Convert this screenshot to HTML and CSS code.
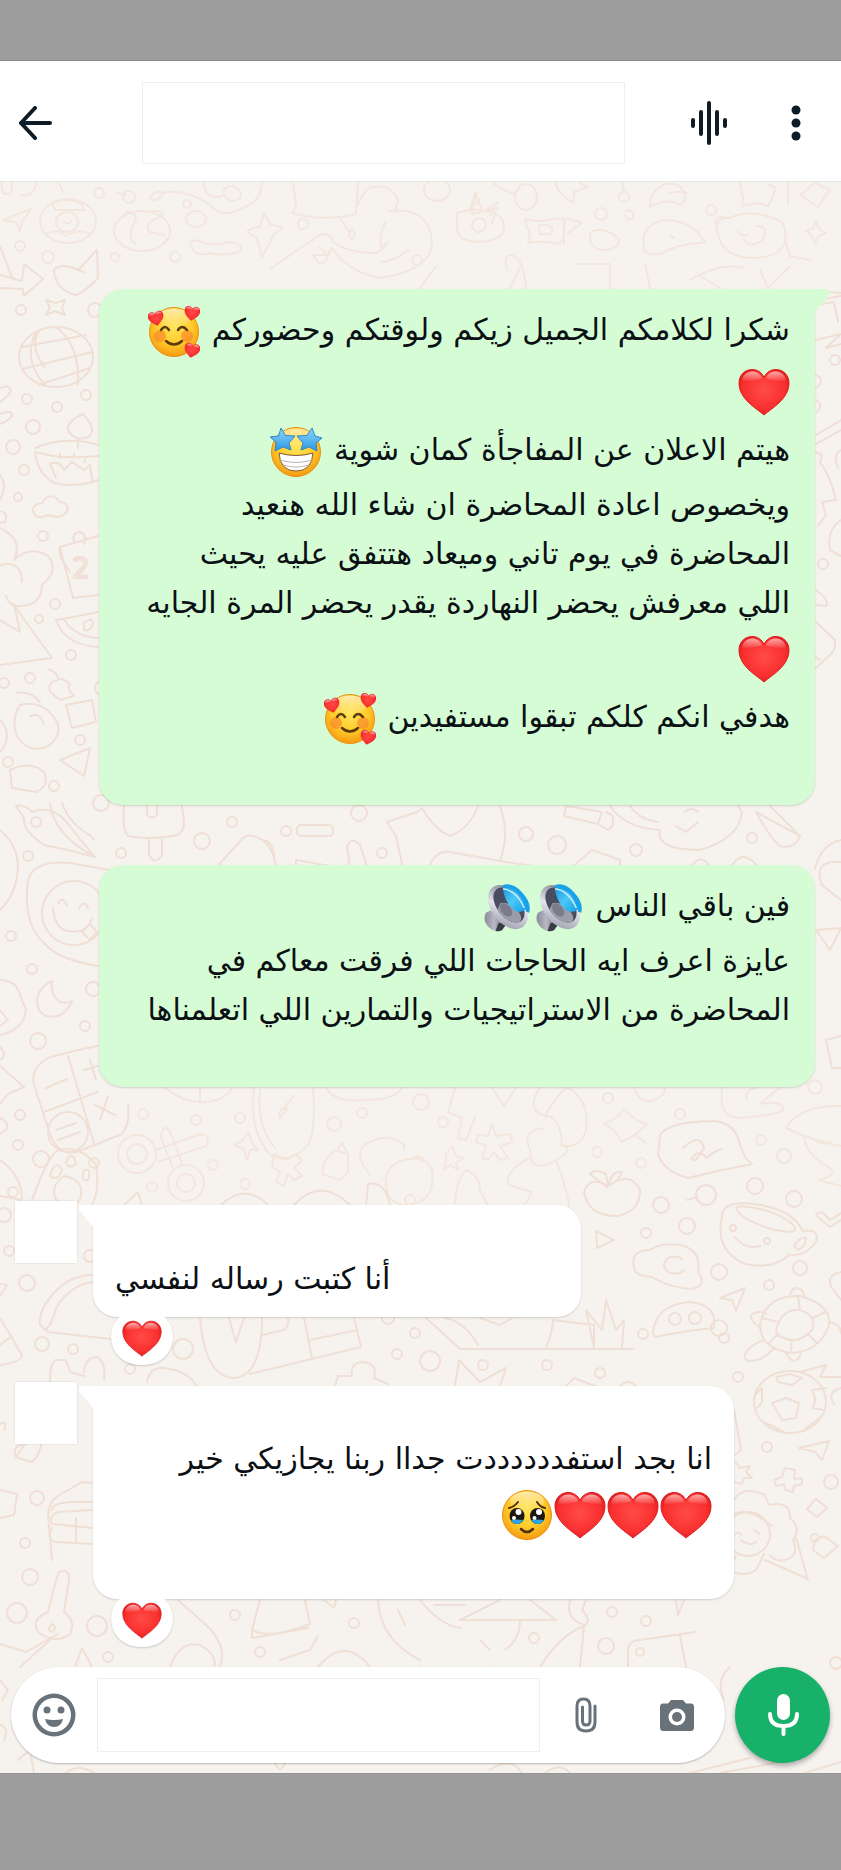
FILE: index.html
```html
<!DOCTYPE html>
<html lang="ar">
<head>
    <meta charset="utf-8">
    <meta name="viewport" content="width=device-width, initial-scale=1">
    <title>Chat</title>
    <link rel="stylesheet" href="styles.css">
</head>

<body>

  <!-- shared emoji -->
  <svg class="defs" width="0" height="0" aria-hidden="true">
    <defs>
      <radialGradient id="gFace" cx="50%" cy="38%" r="62%">
        <stop offset="0" stop-color="#ffe65a"/>
        <stop offset=".6" stop-color="#ffca28"/>
        <stop offset="1" stop-color="#f59a12"/>
      </radialGradient>
      <linearGradient id="gShine" x1="0" y1="0" x2="0" y2="1">
        <stop offset="0" stop-color="#fff" stop-opacity=".6"/>
        <stop offset="1" stop-color="#fff" stop-opacity="0"/>
      </linearGradient>
      <radialGradient id="gHeart" cx="50%" cy="45%" r="60%">
        <stop offset="0" stop-color="#ff4b47"/>
        <stop offset=".7" stop-color="#f9302f"/>
        <stop offset="1" stop-color="#dd1519"/>
      </radialGradient>
      <linearGradient id="gStar" x1="0" y1="0" x2="0" y2="1">
        <stop offset="0" stop-color="#8fd8ff"/>
        <stop offset="1" stop-color="#2b96e0"/>
      </linearGradient>
      <linearGradient id="gMetal" x1="0" y1="0" x2="1" y2="1">
        <stop offset="0" stop-color="#6d6d7c"/>
        <stop offset=".5" stop-color="#e3e3ec"/>
        <stop offset="1" stop-color="#8d8d9e"/>
      </linearGradient>
      <linearGradient id="gMagnet" x1="0" y1="0" x2="1" y2="0">
        <stop offset="0" stop-color="#8a8a98"/>
        <stop offset=".4" stop-color="#b9b9c6"/>
        <stop offset="1" stop-color="#43434f"/>
      </linearGradient>
      <linearGradient id="gBlue" x1="0" y1="0" x2="1" y2="1">
        <stop offset="0" stop-color="#1593d6"/>
        <stop offset=".5" stop-color="#4cc8f7"/>
        <stop offset="1" stop-color="#12a0e6"/>
      </linearGradient>
    </defs>

    <symbol id="heart" viewBox="0 0 52 48">
      <path d="M26 47C18 40 1 31 1 15C1 7 7 1.500 14 1.500C19.500 1.500 24 4.500 26 9.500C28 4.500 32.500 1.500 38 1.500C45 1.500 51 7 51 15C51 31 34 40 26 47Z" fill="url(#gHeart)" stroke="#dc1c1f" stroke-width="1"/>
      <path d="M4 14C4 7 9 3.500 14 3.500C19 3.500 22.500 6 24 10C20 13 8 12 4 14Z" fill="url(#gShine)"/>
      <path d="M28 10C29.500 6 33 3.500 38 3.500C43 3.500 48 7 48 14C44 12 32 13 28 10Z" fill="url(#gShine)"/>
    </symbol>

    <symbol id="face" viewBox="0 0 52 52">
      <circle cx="26" cy="26" r="24.500" fill="url(#gFace)" stroke="#ee9013" stroke-width="1"/>
      <ellipse cx="26" cy="12" rx="17" ry="9.500" fill="url(#gShine)"/>
    </symbol>

    <symbol id="love" viewBox="0 0 52 52">
      <use href="#face" width="52" height="52"/>
      <circle cx="12" cy="30" r="6" fill="#f8702c" opacity=".5"/>
      <circle cx="39" cy="30" r="6" fill="#f8702c" opacity=".5"/>
      <path d="M13 24Q17 18 21 24M30 24Q34 18 39 24" fill="none" stroke="#5b3a10" stroke-width="2.500" stroke-linecap="round"/>
      <path d="M18 35Q26 42 34 35" fill="none" stroke="#5b3a10" stroke-width="2.500" stroke-linecap="round"/>
      <use href="#heart" x="0" y="5" width="16" height="15" transform="rotate(-12 8 12)"/>
      <use href="#heart" x="36" y="0" width="16" height="15" transform="rotate(8 44 8)"/>
      <use href="#heart" x="36" y="37" width="16" height="15" transform="rotate(12 44 44)"/>
    </symbol>

    <symbol id="star" viewBox="0 0 52 52">
      <use href="#face" width="52" height="52"/>
      <path d="M9 27Q26 32 43 27Q42 45 26 45Q10 45 9 27Z" fill="#fff" stroke="#7a5a35" stroke-width="1"/>
      <path d="M10 34Q26 39 42 34M13 39Q26 43 39 39" fill="none" stroke="#b9b5b0" stroke-width="1"/>
      <path d="M11 2L15.500 9.500L25 10L19 17L21 24L13 21L5 25L6 16L0 11L8.500 10Z" fill="url(#gStar)" stroke="#2f86c6" stroke-width="1"/>
      <path d="M42 2L45 10L52 12L46 17L47 25L39 21L31 24L33 17L27 10L37 9.500Z" fill="url(#gStar)" stroke="#2f86c6" stroke-width="1"/>
    </symbol>

    <symbol id="tears" viewBox="0 0 52 52">
      <use href="#face" width="52" height="52"/>
      <path d="M8 19Q13 18 17 13M36 13Q39 18 44 19" fill="none" stroke="#4b3112" stroke-width="2" stroke-linecap="round"/>
      <ellipse cx="16" cy="27" rx="7.500" ry="8" fill="#1c1713"/>
      <ellipse cx="36.500" cy="27" rx="7.500" ry="8" fill="#1c1713"/>
      <path d="M10 31Q16 30 22 31Q20 35 16 35Q12 35 10 31ZM30.500 31Q36.500 30 42.500 31Q41 35 36.500 35Q32 35 30.500 31Z" fill="#2aa5e8"/>
      <circle cx="17.500" cy="23" r="3" fill="#fff"/>
      <circle cx="38" cy="23" r="3" fill="#fff"/>
      <circle cx="13" cy="29" r="2" fill="#fff"/>
      <circle cx="33.500" cy="29" r="2" fill="#fff"/>
      <path d="M20 40Q26 46 32 40" fill="none" stroke="#4b3112" stroke-width="2.500" stroke-linecap="round"/>
    </symbol>

    <symbol id="speaker" viewBox="0 0 50 50">
      <path d="M2 30L14 24L26 38L18 48Q12 51 5 45Q-2 38 2 30Z" fill="url(#gMagnet)"/>
      <path d="M15 41L26 38L19 48Q16 50 12 49Z" fill="#3b3b48"/>
      <ellipse cx="25" cy="24" rx="26" ry="17" transform="rotate(52 25 24)" fill="url(#gMetal)"/>
      <ellipse cx="26" cy="22" rx="21" ry="12.500" transform="rotate(52 26 22)" fill="#4a4d60"/>
      <path d="M14 27Q24 42 37 40Q42 35 33 25Q24 18 17 20Z" fill="#9c9caa"/>
      <ellipse cx="23" cy="27" rx="8" ry="5" transform="rotate(50 23 27)" fill="#7b7b8a"/>
      <path d="M19 2Q34 3 44 25Q40 31 33 28Q22 22 19 2Z" fill="url(#gBlue)"/>
      <path d="M20 1Q30-2 40 9Q50 20 47 30L44 29Q42 17 34 9Q27 3 20 3Z" fill="#17a2ea"/>
      <path d="M20 5Q34 7 42 25" fill="none" stroke="#c9f1ff" stroke-width="1.500"/>
    </symbol>
  </svg>

  <div class="system-bar top"></div>

  <header class="header">
    <button class="icon-btn back" aria-label="Back">
      <svg width="34" height="34" viewBox="0 0 34 34"><path d="M17 2L3 17L17 32M3 17H32" /></svg>
    </button>
    <div class="contact"></div>
    <button class="icon-btn" aria-label="Voice chat">
      <svg width="38" height="44" viewBox="0 0 38 44"><path d="M3 19V25M11 11V33M19 2V42M27 11V33M35 19V25"/></svg>
    </button>
    <button class="icon-btn menu" aria-label="More options">
      <svg width="12" height="38" viewBox="0 0 12 38"><circle cx="6" cy="6" r="4.500"/><circle cx="6" cy="19" r="4.500"/><circle cx="6" cy="32" r="4.500"/></svg>
    </button>
  </header>

  <div class="chat">

    <!-- wallpaper doodles -->
    <svg class="wallpaper" viewBox="0 182 841 1591" preserveAspectRatio="xMidYMin slice" aria-hidden="true">
      <!-- top strip -->
      <g class="faint">
        <path d="M2 182Q0 195 8 194Q14 192 11 183M22 195Q34 197 37 182M58 182Q64 192 62 193"/>
        <path d="M3 220L31 209L22 222L20 231L16 222Z"/>
        <ellipse cx="68" cy="221" rx="28" ry="22"/><ellipse cx="67" cy="222" rx="11" ry="10"/><path d="M52 204Q66 196 82 204L84 210H56ZM46 234Q58 228 66 236Q78 228 90 234M64 221Q67 226 71 221"/>
        <ellipse cx="142" cy="231" rx="28" ry="20"/><path d="M125 217Q124 210 132 213Q139 215 133 225Q127 240 136 244M150 212Q162 208 163 216Q153 219 148 224Q146 233 156 233L164 235"/>
        <circle cx="99" cy="193" r="5"/><circle cx="129" cy="197" r="6"/><path d="M116 192L125 195"/><circle cx="187" cy="204" r="4"/><ellipse cx="196" cy="219" rx="10" ry="8"/><circle cx="303" cy="224" r="5"/>
        <path d="M150 197Q155 190 163 193Q159 202 152 200ZM163 193Q185 188 210 205Q222 219 240 209Q262 202 262 182"/>
        <path d="M203 182Q205 200 222 196M224 195Q222 187 232 186Q243 189 240 198Q231 205 224 195Z"/>
        <path d="M293 182L296 207L292 213Q320 222 356 214L358 182M358 205Q363 192 369 188Q390 182 398 200L395 213M340 218L350 233M352 229Q358 234 352 239Q346 236 352 229"/>
        <path d="M264 213L270 224L283 228L273 235L270 243L262 257L257 238L247 232Q252 227 260 227Z"/>
        <path d="M190 244Q193 237 204 243Q217 246 228 242Q242 242 241 251Q226 257 210 253Q194 258 190 244Z"/>
        <path d="M270 269L318 236Q330 230 333 242Q350 254 377 253Q384 248 388 241M388 211Q430 206 432 242Q432 270 380 278Q348 272 332 248M319 247L328 255L313 255L318 262Q326 267 330 250M385 223Q378 238 382 250M382 262Q397 260 408 250"/>
        <ellipse cx="437" cy="190" rx="13" ry="11"/><ellipse cx="526" cy="197" rx="11" ry="13"/><path d="M492 182L500 188L514 194M480 199L468 211M476 192L472 214L482 212L497 208L492 223"/>
        <path d="M457 213Q480 205 501 217Q511 236 488 241Q455 245 457 225Z"/><circle cx="479" cy="225" r="7"/><path d="M470 210L475 193L483 212L498 202L490 216"/>
        <path d="M525 219Q541 223 554 219Q568 217 565 223L563 239L560 244Q542 240 528 243Q532 233 527 228Z"/><path d="M540 234Q535 222 546 225Q556 227 550 234ZM567 218L582 223L568 233M564 219V244"/>
        <circle cx="601" cy="214" r="6"/><circle cx="624" cy="197" r="5"/><path d="M622 182L624 192M626 211Q634 208 633 218Q628 222 625 215"/><path d="M592 231Q604 228 614 235Q624 240 614 248Q602 253 592 245Q588 236 592 231Z"/>
        <path d="M555 182Q558 194 573 203L574 192L588 187L580 183M650 205Q651 190 665 184Q686 182 685 200L680 205Q668 197 650 207ZM668 194Q676 190 688 193"/>
        <path d="M644 248Q640 222 668 220Q695 222 705 243Q682 242 660 254Q644 256 644 248ZM670 235L674 238"/>
        <circle cx="711" cy="210" r="5"/><path d="M740 182L743 198L742 206L757 203L768 206L772 198L776 188L768 184M788 182V204M800 195L815 183L830 190L818 207Z"/>
        <path d="M718 234Q713 217 730 218Q750 208 775 219Q788 222 785 240Q783 258 750 258Q722 256 718 234ZM716 225Q714 215 726 218M738 231Q738 236 748 235M757 226Q770 226 762 241Q748 249 744 239M785 240L790 256L810 260"/>
        <path d="M806 231L813 229L816 221L819 229L826 233L818 236L815 244L812 236Z"/>
        <circle cx="20" cy="246" r="5"/><circle cx="48" cy="257" r="6"/><circle cx="175" cy="257" r="5"/><circle cx="115" cy="257" r="4"/><circle cx="417" cy="260" r="5"/>
        <path d="M507 270Q502 252 514 256Q524 262 526 288M577 264H610V288M645 264L650 288M510 288L520 268M690 280Q720 262 744 268M420 288L436 266M700 276L720 288M760 270L768 288L790 266"/>
      </g>
      <!-- left edge -->
      <path d="M0 246L13 280M0 275L22 281L24 264L43 279L24 296L23 289L0 288"/>
      <path d="M54 270Q60 262 78 270L97 250L98 278Q85 292 76 295Q55 290 54 270ZM78 270L84 272"/>
      <path d="M46 300L56 303L65 300L62 308L65 315L55 311L46 315L50 307Z"/>
      <circle cx="21" cy="310" r="5"/><circle cx="95" cy="310" r="7"/>
      <ellipse cx="56" cy="357" rx="37" ry="30"/><path d="M22 347L86 335M22 369L92 352M38 385L90 368M36 332Q22 360 45 385M56 327Q80 345 78 385M40 330Q28 345 45 368"/>
      <circle cx="86" cy="395" r="5"/><circle cx="27" cy="399" r="5"/><circle cx="57" cy="407" r="5"/><path d="M0 388Q10 384 11 391Q8 397 0 402M0 414Q12 409 12 416Q8 421 0 424"/><circle cx="33" cy="427" r="7"/><circle cx="13" cy="447" r="7"/>
      <path d="M68 430Q68 420 83 414Q98 430 88 437Q74 442 68 430ZM78 438V448M35 448Q65 435 99 445M35 452Q38 475 55 483Q75 488 99 480M36 452Q60 460 98 456M50 464Q60 460 64 470L72 462L84 470L90 465L92 480M50 464L56 478M60 454V458M74 454V457M85 460V462"/>
      <circle cx="24" cy="470" r="5"/><path d="M0 475Q8 485 0 500M0 511Q9 513 5 522L0 523"/><circle cx="18" cy="497" r="4"/>
      <path d="M34 514Q30 505 42 503Q50 490 60 502Q70 503 67 512Q60 520 48 515Q38 520 34 514Z"/><circle cx="43" cy="536" r="5"/>
      <path d="M0 528Q24 540 14 560Q30 545 48 556Q60 570 42 585Q42 605 20 606Q10 608 6 596M0 565Q22 560 22 582M13 604L52 658L0 665M0 620L20 632L14 604"/>
      <path d="M60 547L98 536M60 547L73 598L98 595M74 542Q72 532 80 532Q88 535 84 544M60 547Q57 555 70 572"/>
      <text x="72" y="578" class="doodle-num">2</text>
      <circle cx="55" cy="604" r="5"/><circle cx="39" cy="619" r="4"/><path d="M56 620Q75 617 98 612M56 620Q65 645 98 647M65 621Q76 637 98 638M84 623Q92 616 93 624Q90 632 84 630Z"/>
      <circle cx="71" cy="655" r="5"/><circle cx="30" cy="678" r="5"/><circle cx="4" cy="683" r="5"/><circle cx="102" cy="688" r="7"/>
      <path d="M48 669Q58 672 58 680Q47 682 50 692L60 700L74 696Q66 688 70 684Q60 676 58 680M17 693Q30 690 40 702"/>
      <path d="M20 705Q40 700 52 715Q66 730 50 745Q30 755 18 738Q10 720 20 705ZM30 716Q40 712 44 724M60 760L90 748L84 776ZM0 720Q14 735 0 752M66 705L92 700L96 722L72 728ZM10 770Q30 760 44 772Q50 786 36 792L12 788Z"/>
      <circle cx="80" cy="740" r="5"/><circle cx="54" cy="786" r="5"/><circle cx="8" cy="762" r="5"/>
      <path d="M16 806Q25 804 32 812Q50 805 65 820Q80 840 95 857Q70 850 44 845Q22 830 24 818ZM50 804Q54 835 95 857M62 803Q70 825 90 835L94 840"/><circle cx="36" cy="822" r="5"/>
      <circle cx="28" cy="856" r="5"/><circle cx="121" cy="853" r="5"/><circle cx="101" cy="803" r="8"/><path d="M0 830Q18 845 18 868Q16 895 0 910"/>
      <path d="M98 966Q60 960 46 945Q22 925 28 880Q34 860 70 863L115 871"/><circle cx="74" cy="913" r="32"/><path d="M53 908Q55 935 78 931Q88 930 92 918M58 904Q62 895 67 905M79 908Q84 899 88 908M82 932L90 924L97 932L90 940Z"/>
      <circle cx="11" cy="936" r="5"/><circle cx="32" cy="969" r="5"/><path d="M52 981Q50 995 60 1002Q68 1004 72 1001Q64 1020 46 1016Q34 1010 38 995Q42 985 52 981Z"/><circle cx="93" cy="989" r="7"/><circle cx="85" cy="1026" r="5"/><circle cx="38" cy="1041" r="8"/>
      <path d="M0 980Q16 980 20 995L26 1010Q24 1030 0 1035M0 1010L8 1020L0 1026M0 1066L24 1087L8 1094L0 1104M0 1047Q8 1055 0 1060"/>
      <path d="M98 1046Q75 1050 48 1058Q30 1068 34 1085L50 1134Q60 1160 82 1150L122 1134Q130 1125 128 1105M68 1056L94 1143M44 1112L98 1092M46 1088L67 1079M84 1070L98 1066M90 1060L96 1080M95 1105L115 1115M108 1096L100 1120M56 1130L76 1123M58 1140L80 1132"/><circle cx="68" cy="1132" r="20"/>
      <circle cx="20" cy="1115" r="5"/><circle cx="18" cy="1145" r="5"/><circle cx="41" cy="1159" r="8"/><circle cx="94" cy="1163" r="5"/><path d="M0 1118Q10 1122 6 1130L0 1134M0 1160Q22 1175 22 1200L0 1196"/>
      <!-- strip between the green bubbles -->
      <path d="M124 806Q122 830 128 836Q150 840 172 836Q185 835 184 820L182 806M149 838V855Q155 866 162 855V838M147 806V815Q152 820 157 815V806"/>
      <path d="M215 869L243 838Q250 832 262 840Q274 848 276 869M262 840Q272 840 274 855M296 869V860L330 866L328 869"/>
      <rect x="297" y="825" width="36" height="11" rx="4"/><circle cx="286" cy="831" r="5"/><circle cx="232" cy="822" r="5"/><circle cx="202" cy="841" r="8"/><circle cx="359" cy="813" r="8"/><circle cx="382" cy="853" r="5"/>
      <path d="M350 869L347 846Q352 836 360 845L368 869M403 869L396 836L387 822L417 812L422 808Q435 830 450 836Q470 828 478 806M500 806Q510 835 500 860M428 869Q435 850 450 852L500 861L540 867"/>
      <circle cx="526" cy="834" r="7"/><circle cx="557" cy="845" r="9"/><circle cx="636" cy="850" r="6"/><circle cx="752" cy="838" r="5"/>
      <path d="M566 806L564 816L598 824L602 812L566 806M598 824L608 830Q616 825 612 815L606 812M610 806Q625 828 660 830M630 806Q640 820 658 822M660 830Q655 850 700 850Q740 838 742 812L738 806M676 826L686 832L698 822M684 812Q692 806 698 812"/>
      <path d="M756 812Q770 838 780 846Q795 850 800 836L756 812M770 806L800 836M815 869Q820 845 841 840M690 869Q700 850 712 869M730 869Q742 845 760 869M570 869L592 850L620 860V869"/>
      <!-- strip under the second bubble -->
      <g class="faint">
        <path d="M165 1088Q185 1104 206 1102Q225 1100 232 1088M200 1088V1102M254 1088Q248 1128 270 1155Q290 1165 308 1145Q316 1130 313 1088M260 1090Q256 1125 275 1148M282 1110L294 1096M280 1118Q277 1108 288 1108Z"/>
        <path d="M326 1088Q335 1103 365 1100Q395 1100 402 1088M455 1088L448 1112L462 1118L458 1138L466 1140L475 1118M492 1088L504 1106L516 1088"/>
        <circle cx="143" cy="1114" r="5"/><circle cx="196" cy="1120" r="5"/><circle cx="240" cy="1118" r="5"/><circle cx="421" cy="1102" r="8"/><circle cx="362" cy="1113" r="5"/><circle cx="443" cy="1122" r="5"/><circle cx="334" cy="1124" r="7"/><circle cx="213" cy="1165" r="5"/><circle cx="245" cy="1184" r="5"/><circle cx="152" cy="1187" r="5"/><circle cx="410" cy="1200" r="5"/><circle cx="608" cy="1098" r="5"/><circle cx="680" cy="1114" r="5"/><circle cx="597" cy="1152" r="5"/><circle cx="641" cy="1163" r="5"/><circle cx="761" cy="1140" r="5"/><circle cx="784" cy="1156" r="7"/><circle cx="815" cy="1087" r="7"/>
        <circle cx="137" cy="1154" r="19"/><circle cx="137" cy="1154" r="10"/><circle cx="186" cy="1183" r="18"/><circle cx="186" cy="1183" r="9"/><path d="M156 1150L200 1134Q212 1136 206 1146L158 1162M173 1168L161 1138V1135Q165 1120 172 1136L182 1164"/>
        <path d="M248 1132L253 1144L258 1150L250 1150L247 1160L244 1149L234 1145L242 1141ZM274 1154L286 1160L296 1154L302 1160L294 1168L302 1176L294 1180L288 1174L284 1186L276 1182L280 1172L272 1166Z"/>
        <path d="M335 1150L348 1154V1172L340 1180L322 1174L324 1162ZM337 1150L342 1143L347 1152"/>
        <path d="M370 1175Q350 1150 370 1142Q390 1132 404 1145V1150M388 1194Q380 1166 404 1160Q425 1154 432 1170Q436 1200 412 1204Q395 1208 388 1194ZM412 1160Q418 1152 426 1162"/>
        <path d="M452 1146L456 1156L464 1158L456 1163L458 1170L450 1165L444 1170L446 1160L446 1154ZM492 1124L496 1136L510 1134L512 1142L500 1146L508 1158L500 1160L494 1152L488 1160L482 1158L486 1146L476 1142L478 1135L488 1136Z"/>
        <path d="M540 1088Q525 1110 545 1116Q560 1090 568 1088Q590 1100 586 1130Q580 1150 560 1145M545 1116Q560 1115 562 1145Q575 1150 556 1160Q530 1175 530 1150Q520 1130 545 1128M530 1158Q505 1170 508 1185L532 1192M532 1192L522 1210M556 1160Q566 1185 570 1210M455 1210Q455 1180 466 1170Q480 1175 480 1190L490 1210"/>
        <path d="M624 1109L636 1120L647 1124L635 1135L646 1143M635 1135L622 1142L614 1130L604 1124Q616 1120 624 1109"/>
        <path d="M722 1088Q718 1118 740 1118Q775 1115 784 1110Q782 1100 760 1104Q770 1095 780 1088M747 1100Q744 1090 756 1088M634 1088Q640 1105 655 1100Q668 1092 664 1088M786 1128Q800 1105 841 1106M786 1128Q810 1140 841 1146M804 1136Q805 1155 830 1168Q838 1175 818 1180L841 1186M812 1138Q820 1146 830 1142"/>
      </g>
      <path d="M660 1135Q668 1122 712 1121Q736 1122 740 1145Q745 1160 752 1164Q720 1170 688 1178Q665 1172 658 1155ZM683 1148Q700 1132 704 1148Q694 1166 692 1158Q700 1148 706 1158Q716 1150 722 1149"/>
      <!-- bottom left and around white bubbles -->
      <path d="M32 1200Q50 1150 60 1150Q80 1145 96 1165Q100 1190 92 1205M52 1170Q58 1160 62 1170Q58 1182 50 1176ZM68 1158Q74 1152 76 1164Q68 1170 66 1162ZM84 1170Q92 1168 88 1180Q80 1182 84 1170M64 1176Q86 1180 80 1200Q70 1210 56 1200Q50 1185 64 1176"/>
      <path d="M124 1205L138 1192L142 1205M221 1205Q245 1182 268 1205M294 1205Q320 1176 350 1205M366 1205L368 1184Q385 1180 390 1205"/>
      <circle cx="13" cy="1192" r="5"/><circle cx="9" cy="1251" r="5"/><circle cx="4" cy="1215" r="7"/><circle cx="27" cy="1283" r="8"/><circle cx="90" cy="1256" r="6"/>
      <path d="M93 1275Q70 1275 55 1292Q38 1310 40 1325L48 1332L120 1340M93 1282Q70 1285 56 1308Q52 1325 45 1330M0 1284L7 1285L0 1296M0 1318L22 1355Q22 1362 0 1365M0 1345L12 1336"/>
      <circle cx="42" cy="1344" r="7"/><circle cx="73" cy="1349" r="5"/><circle cx="183" cy="1349" r="10"/><circle cx="130" cy="1369" r="5"/>
      <path d="M50 1382Q50 1362 56 1360L66 1360L70 1372L84 1376M84 1372Q85 1358 96 1357Q106 1360 104 1380M147 1382Q150 1366 165 1368Q190 1372 196 1386"/>
      <path d="M200 1318Q205 1378 235 1378Q262 1375 262 1318M229 1318L236 1342L244 1318M262 1335L284 1330Q290 1325 288 1318M250 1374L361 1347L354 1318M304 1318L312 1358M309 1340L358 1330"/>
      <circle cx="388" cy="1318" r="6"/><circle cx="415" cy="1333" r="5"/><circle cx="397" cy="1354" r="5"/><circle cx="430" cy="1361" r="10"/><circle cx="483" cy="1365" r="5"/><circle cx="547" cy="1365" r="5"/><circle cx="600" cy="1373" r="5"/><circle cx="643" cy="1334" r="5"/><circle cx="719" cy="1328" r="8"/>
      <path d="M426 1318L460 1349H633M445 1318Q465 1322 478 1345M546 1347Q552 1335 553 1320L594 1325V1348M594 1348L586 1310L602 1330L606 1300L616 1330L624 1320L622 1348M480 1318L500 1325L512 1318"/>
      <path d="M335 1386L338 1376L352 1376Q350 1362 364 1362Q378 1364 374 1378L388 1384M455 1386L459 1360L480 1382L506 1368L500 1386M595 1386L574 1378L566 1386M620 1386Q628 1378 636 1386"/>
      <!-- right side, lower half -->
      <path d="M584 1192Q590 1175 608 1186Q630 1170 640 1190Q640 1212 617 1216Q588 1216 584 1192ZM607 1187L590 1174Q595 1168 606 1174L608 1186Q612 1170 622 1172Q618 1182 608 1186M596 1231L614 1240L597 1248Z"/>
      <circle cx="661" cy="1205" r="8"/><circle cx="706" cy="1195" r="10"/><path d="M697 1197L687 1200"/><circle cx="755" cy="1186" r="8"/><circle cx="794" cy="1199" r="8"/><circle cx="687" cy="1226" r="8"/><circle cx="646" cy="1233" r="5"/><circle cx="719" cy="1272" r="8"/><circle cx="769" cy="1285" r="5"/><circle cx="800" cy="1268" r="7"/>
      <path d="M722 1216Q722 1203 745 1203Q790 1206 803 1231Q820 1228 816 1242Q806 1256 792 1255M722 1216Q714 1250 745 1264Q775 1270 790 1254M736 1208Q740 1220 775 1230Q805 1236 790 1222Q770 1208 740 1206ZM735 1237Q745 1250 761 1246M794 1246Q800 1236 806 1238Q806 1246 798 1250ZM816 1214L822 1212L830 1220L841 1213M817 1216L830 1227L841 1220"/><circle cx="733" cy="1228" r="3"/><circle cx="767" cy="1241" r="3"/>
      <path d="M634 1268Q630 1250 650 1250Q660 1242 680 1245Q702 1250 698 1272Q708 1285 692 1289Q670 1288 652 1277Q635 1276 634 1268ZM684 1270Q678 1276 668 1272Q660 1265 668 1258Q678 1254 682 1260"/>
      <path d="M720 1298L745 1288L736 1311L732 1300ZM653 1333Q655 1305 690 1302Q718 1305 714 1328Q690 1330 660 1336Q653 1338 653 1333Z"/><circle cx="675" cy="1319" r="6"/><circle cx="695" cy="1318" r="6"/>
      <path d="M760 1325Q765 1295 800 1296Q832 1305 829 1325Q820 1352 790 1353Q760 1348 760 1325ZM776 1330Q782 1308 800 1310Q818 1316 812 1330Q798 1345 784 1338Q776 1336 776 1330ZM762 1318L778 1322M798 1296L800 1310M826 1312L812 1318M816 1342L808 1334M791 1352L792 1340M768 1344L778 1334M790 1296Q792 1284 802 1290L804 1296M761 1328Q748 1320 752 1314Q760 1310 766 1314M764 1340Q740 1350 746 1360Q760 1364 774 1348M786 1353Q794 1368 801 1354M830 1322Q841 1325 841 1333M841 1272Q825 1275 832 1288L841 1300"/>
      <circle cx="724" cy="1338" r="5"/>
      <ellipse cx="790" cy="1402" rx="36" ry="31"/><path d="M772 1403L786 1398L799 1403L796 1418L782 1420ZM776 1377L790 1374L802 1378L792 1385L778 1382ZM755 1395L762 1388L762 1402L757 1408M826 1388L812 1390Q818 1400 812 1408L824 1410M764 1422L784 1432M822 1416L804 1430M800 1372L826 1365L820 1377H841M841 1388Q826 1392 834 1404"/>
      <path d="M799 1448L829 1441L822 1460L815 1452ZM774 1480L782 1477L785 1468L795 1470L794 1479L802 1478L802 1484L794 1486L793 1492L785 1490L784 1484L776 1486Z"/><circle cx="767" cy="1447" r="5"/><circle cx="831" cy="1482" r="7"/><circle cx="738" cy="1377" r="5"/>
      <path d="M734 1410L741 1450L735 1455M735 1462L740 1468L750 1466L746 1472L752 1478L744 1478L742 1484L735 1482"/>
      <path d="M816 1499L827 1508L817 1517L807 1509ZM824 1536L838 1546L824 1558L813 1550L815 1540Z"/><circle cx="815" cy="1538" r="4"/>
      <circle cx="748" cy="1534" r="22"/><path d="M724 1522Q740 1500 772 1526M734 1535Q738 1530 742 1535M754 1530L760 1534M741 1540Q750 1547 756 1542M734 1500Q742 1485 765 1495Q768 1505 770 1505Q790 1500 790 1518Q802 1528 793 1540Q800 1556 785 1560Q775 1562 770 1555M734 1508Q720 1510 722 1515M715 1518Q696 1520 704 1530Q692 1545 706 1550Q710 1562 728 1560M736 1556L728 1570Q745 1578 756 1570L764 1554M728 1564Q712 1572 712 1590M765 1560L806 1578M796 1538L808 1580"/>
      <!-- left of the last white bubble -->
      <path d="M18 1458Q10 1450 20 1445L42 1440Q40 1455 32 1462ZM15 1458L28 1440M0 1424Q8 1420 4 1430M52 1510Q52 1500 93 1502M93 1483L82 1482L58 1496M58 1496Q50 1500 48 1515L52 1560"/>
      <path d="M93 1510L58 1512Q48 1516 52 1524L93 1528M52 1528Q46 1540 56 1542L93 1544M76 1518V1542M0 1490L17 1494L14 1515L0 1518"/><circle cx="37" cy="1498" r="7"/><circle cx="25" cy="1543" r="5"/><circle cx="30" cy="1577" r="8"/><circle cx="17" cy="1613" r="10"/><circle cx="97" cy="1626" r="10"/>
      <path d="M59 1572Q70 1568 69 1580L64 1612Q76 1620 70 1634Q55 1645 38 1632Q30 1620 48 1612L56 1580ZM52 1624Q58 1628 52 1632Q46 1630 52 1624M0 1644L26 1652L58 1634M20 1667L50 1640M75 1667L82 1648L92 1667"/>
      <!-- under the last white bubble -->
      <path d="M178 1600L205 1624Q228 1645 220 1667M260 1600L252 1630Q270 1640 310 1624L305 1600M252 1630V1638L308 1628M324 1600L334 1608L336 1600M378 1600Q380 1640 420 1660M398 1610L405 1625M420 1600Q440 1625 460 1628M500 1600L460 1620H556L530 1600M434 1605H465M570 1600Q565 1620 585 1625Q592 1620 582 1610L586 1600M676 1600L678 1615L684 1600M170 1667Q180 1640 200 1645Q218 1655 214 1667M318 1667Q345 1635 370 1667M280 1660L310 1650L318 1636M480 1640L490 1650M505 1650Q520 1640 520 1620M540 1667Q560 1635 584 1626L580 1667M628 1667V1648Q630 1640 640 1640L695 1632M680 1636L686 1667"/>
      <circle cx="235" cy="1615" r="5"/><circle cx="354" cy="1623" r="5"/><circle cx="260" cy="1652" r="5"/><circle cx="534" cy="1638" r="5"/><circle cx="606" cy="1646" r="8"/><circle cx="612" cy="1612" r="5"/><circle cx="646" cy="1621" r="5"/><circle cx="640" cy="1652" r="4"/><circle cx="108" cy="1657" r="5"/><circle cx="836" cy="1663" r="6"/>
      <path d="M420 1667Q450 1690 490 1667M730 1667Q715 1680 724 1700M18 1760L30 1750L34 1773M66 1773Q78 1763 94 1773M275 1763Q280 1775 285 1763M490 1770Q510 1755 522 1773M545 1773Q560 1762 570 1773M690 1773L750 1758M720 1773L780 1762M805 1773L841 1762M0 1680L8 1690L2 1700M0 1725Q10 1728 4 1740"/>
      <!-- right edge, upper half -->
      <path d="M816 291L841 293M818 300L841 296M816 305L834 302L838 322M816 340L841 334L826 348L841 344M816 375Q826 380 816 388M816 400Q824 405 817 412M816 435L841 420M816 444L841 430M816 452L822 455L820 462Q830 475 836 500L822 502L826 515L818 526M841 450Q832 455 838 468M841 520Q826 530 830 550L841 556M816 590Q830 600 826 606L816 605M816 622L835 640Q836 650 830 655L798 684M806 650L820 660"/>
      <circle cx="835" cy="360" r="5"/><circle cx="823" cy="564" r="5"/>
      <path d="M841 862Q812 860 822 885L841 900M816 930L841 928L830 950ZM841 1036L826 1040L832 1068L841 1068"/>
    </svg>

    <main class="messages">
      <div class="row out">
        <div class="bubble first" dir="rtl">
          <svg class="tail" width="16" height="26" viewBox="0 0 16 26" aria-hidden="true"><path d="M0 0H13Q17 2 14 7L0 25Z"/></svg>
          <p class="line tall">شكرا لكلامكم الجميل زيكم ولوقتكم وحضوركم <svg class="emoji" role="img" aria-label="🥰"><use href="#love"/></svg></p>
          <p class="line tall"><svg class="emoji" role="img" aria-label="❤️"><use href="#heart"/></svg></p>
          <p class="line tall">هيتم الاعلان عن المفاجأة كمان شوية <svg class="emoji" role="img" aria-label="🤩"><use href="#star"/></svg></p>
          <p class="line">ويخصوص اعادة المحاضرة ان شاء الله هنعيد</p>
          <p class="line">المحاضرة في يوم تاني وميعاد هتتفق عليه يحيث</p>
          <p class="line">اللي معرفش يحضر النهاردة يقدر يحضر المرة الجايه</p>
          <p class="line tall"><svg class="emoji" role="img" aria-label="❤️"><use href="#heart"/></svg></p>
          <p class="line tall">هدفي انكم كلكم تبقوا مستفيدين <svg class="emoji" role="img" aria-label="🥰"><use href="#love"/></svg></p>
        </div>
      </div>

      <div class="row out">
        <div class="bubble" dir="rtl">
          <p class="line tall">فين باقي الناس <svg class="emoji sound" role="img" aria-label="🔊"><use href="#speaker"/></svg><svg class="emoji sound" role="img" aria-label="🔊"><use href="#speaker"/></svg></p>
          <p class="line">عايزة اعرف ايه الحاجات اللي فرقت معاكم في</p>
          <p class="line">المحاضرة من الاستراتيجيات والتمارين اللي اتعلمناها</p>
        </div>
      </div>

      <div class="row in short">
        <div class="avatar"></div>
        <div class="bubble">
          <svg class="tail" width="16" height="24" viewBox="0 0 16 24" aria-hidden="true"><path d="M16 0H3Q-1 2 2 6L16 23Z"/></svg>
          <p class="line">أنا كتبت رساله لنفسي</p>
          <button class="reaction" aria-label="❤️"><svg><use href="#heart"/></svg></button>
        </div>
      </div>

      <div class="row in long">
        <div class="avatar"></div>
        <div class="bubble" dir="rtl">
          <svg class="tail" width="16" height="24" viewBox="0 0 16 24" aria-hidden="true"><path d="M16 0H3Q-1 2 2 6L16 23Z"/></svg>
          <p class="line">انا بجد استفددددددت جداا ربنا يجازيكي خير</p>
          <p class="line tall"><svg class="emoji" role="img" aria-label="❤️"><use href="#heart"/></svg><svg class="emoji" role="img" aria-label="❤️"><use href="#heart"/></svg><svg class="emoji" role="img" aria-label="❤️"><use href="#heart"/></svg><svg class="emoji" role="img" aria-label="🥹"><use href="#tears"/></svg></p>
          <button class="reaction" aria-label="❤️"><svg><use href="#heart"/></svg></button>
        </div>
      </div>
    </main>

    <form class="composer">
      <div class="field">
        <button type="button" class="icon-btn" aria-label="Emoji">
          <svg width="44" height="44" viewBox="0 0 44 44"><path fill-rule="evenodd" d="M22 .500a21.500 21.500 0 1 1 0 43a21.500 21.500 0 0 1 0-43zM22 5a17 17 0 1 0 0 34a17 17 0 0 0 0-34z"/><circle cx="15" cy="17" r="3.500"/><circle cx="29" cy="17" r="3.500"/><path d="M13 26Q22 28 31 26Q29 34 22 34Q15 34 13 26Z"/></svg>
        </button>
        <input type="text" class="text-box" aria-label="Message">
        <button type="button" class="icon-btn clip" aria-label="Attach">
          <svg width="24" height="36" viewBox="0 0 24 36"><path d="M21 9V25Q21 34 12 34Q3 34 3 25V9Q3 2 9.500 2Q16 2 16 9V24Q16 28 12 28Q8.500 28 8.500 24V10"/></svg>
        </button>
        <button type="button" class="icon-btn" aria-label="Camera">
          <svg width="34" height="32" viewBox="0 0 34 32"><path fill-rule="evenodd" d="M11 1H23L26 4.500H31Q34 4.500 34 8V28Q34 32 31 32H3Q0 32 0 28V8Q0 4.500 3 4.500H8ZM17 9.500a8.500 8.500 0 1 0 0 17a8.500 8.500 0 0 0 0-17z"/><circle cx="17" cy="18" r="5"/></svg>
        </button>
      </div>
      <button type="button" class="mic" aria-label="Record">
        <svg width="32" height="42" viewBox="0 0 32 42"><rect x="10" y="0" width="13" height="26" rx="6.500"/><path d="M3 20Q3 32 16.500 32Q30 32 30 20M16.500 32V40"/></svg>
      </button>
    </form>
  </div>

  <div class="system-bar bottom"></div>

</body>

</html>
```
FILE: styles.css
```css
* {
    box-sizing: border-box;
}

body {
    margin: 0;
    min-height: 100vh;
    display: flex;
    flex-direction: column;
    background: #f6f3ef;
    color: #0b1014;
    font-family: "DejaVu Sans", sans-serif;
    font-size: 30px;
}

button {
    border: 0;
    padding: 0;
    background: none;
    cursor: pointer;
}

svg {
    display: block;
}

.defs {
    position: absolute;
}

.system-bar {
    background: #9e9e9e;
}
.top {
    height: 61px;
    border-bottom: 1px solid #8c8c8c;
}
.bottom {
    height: 97px;
    border-top: 1px solid #949494;
}

/* header */
.header {
    height: 121px;
    display: flex;
    align-items: center;
    padding: 4px 39px 0 18px;
    background: #fff;
    border-bottom: 1px solid #e6e6e6;
}
.header path {
    fill: none;
    stroke: #0d1c26;
    stroke-width: 4;
    stroke-linecap: round;
    stroke-linejoin: round;
}
.header circle {
    fill: #0d1c26;
}
.contact {
    flex: 1;
    height: 82px;
    margin: 0 65px 0 90px;
    border: 1px solid #efefef;
}
.menu {
    margin-left: 62px;
}

/* chat */
.chat {
    position: relative;
    flex: 1;
    display: flex;
    flex-direction: column;
    overflow: hidden;
}
.wallpaper {
    position: absolute;
    inset: 0;
    width: 100%;
    height: 100%;
    fill: none;
    stroke: #f0dfd4;
    stroke-width: 2;
    stroke-linecap: round;
    stroke-linejoin: round;
}
.faint {
    stroke: #f3e6dd;
}
.doodle-num {
    font: 28px "DejaVu Sans", sans-serif;
}

.messages {
    position: relative;
    flex: 1;
    padding: 107px 26px 0 15px;
}
.row {
    display: flex;
}
.out {
    padding-left: 84px;
    margin-bottom: 60px;
}
.in {
    gap: 16px;
}
.short {
    margin-top: 114px;
    margin-bottom: 65px;
}
.bubble {
    position: relative;
    border-radius: 24px;
    box-shadow: 0 1px 2px rgba(0, 0, 0, .15);
}
.out .bubble {
    flex: 1;
    padding: 11px 25px 53px;
    background: #d5fcd5;
}
.out .first {
    padding-bottom: 58px;
    border-top-right-radius: 0;
}
.in .bubble {
    margin-top: 4px;
    background: #fff;
    border-top-left-radius: 0;
}
.short .bubble {
    width: 488px;
    padding: 49px 22px 14px;
}
.long .bubble {
    width: 641px;
    padding: 48px 22px 56px;
}
.tail {
    position: absolute;
    top: 0;
}
.out .tail {
    left: 100%;
    margin-left: -1px;
    fill: #d5fcd5;
}
.in .tail {
    right: 100%;
    margin-right: -1px;
    fill: #fff;
}
.avatar {
    width: 62px;
    height: 62px;
    background: #fff;
    box-shadow: 0 0 2px rgba(0, 0, 0, .12);
}

.line {
    display: flex;
    align-items: center;
    height: 49px;
    margin: 0;
    gap: 12px;
    line-height: 1;
    white-space: nowrap;
}
.tall {
    height: 60px;
}
.emoji {
    flex: none;
    width: 52px;
    height: 52px;
    margin-top: 4px;
}
.sound {
    width: 48px;
    height: 48px;
}
.sound + .sound {
    margin-right: -8px;
}
.long .line {
    gap: 1px;
}

.reaction {
    position: absolute;
    top: 100%;
    left: 18px;
    width: 62px;
    height: 56px;
    margin-top: -8px;
    padding-top: 3px;
    display: grid;
    place-items: center;
    background: #fff;
    border-radius: 28px;
    box-shadow: 0 1px 2px rgba(0, 0, 0, .18);
}
.reaction svg {
    width: 40px;
    height: 37px;
}

/* composer */
.composer {
    position: relative;
    display: flex;
    gap: 10px;
    padding: 0 11px 10px 11px;
}
.field {
    flex: 1;
    min-width: 0;
    height: 96px;
    display: flex;
    align-items: center;
    padding: 0 31px 0 21px;
    background: #fff;
    border-radius: 48px;
    box-shadow: 0 1px 2px rgba(0, 0, 0, .25);
}
.field svg {
    fill: #68727b;
}
.text-box {
    flex: 1;
    min-width: 0;
    height: 74px;
    margin: 0 34px 0 21px;
    padding: 0 12px;
    border: 1px solid #efefef;
    background: #fff;
    font: inherit;
    outline: 0;
}
.clip {
    margin-right: 62px;
}
.clip path {
    fill: none;
    stroke: #68727b;
    stroke-width: 3;
    stroke-linecap: round;
}
.mic {
    flex: none;
    width: 95px;
    height: 96px;
    display: grid;
    place-items: center;
    background: #17b169;
    border-radius: 50%;
    box-shadow: 0 3px 5px rgba(0, 0, 0, .3);
}
.mic rect {
    fill: #fff;
}
.mic path {
    fill: none;
    stroke: #fff;
    stroke-width: 4;
    stroke-linecap: round;
}
```
